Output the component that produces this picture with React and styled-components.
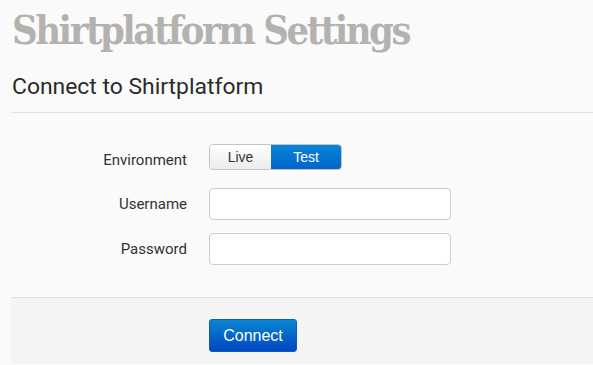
import React, { useState } from 'react';
import styled, { createGlobalStyle } from 'styled-components';

const GlobalStyle = createGlobalStyle`
  html, body {
    margin: 0;
    padding: 0;
    background: #fafafa;
  }
`;

const Page = styled.div`
  padding-left: 11px;
`;

const Title = styled.h1`
  margin: 0;
  padding: 4px 0 0 1px;
  font-family: "DejaVu Serif Condensed", "DejaVu Serif", serif;
  font-stretch: condensed;
  font-weight: 700;
  font-size: 39.5px;
  line-height: 52px;
  color: #b3b2af;
  letter-spacing: -2.45px;
  white-space: nowrap;
`;

const Subtitle = styled.h2`
  margin: 0;
  padding: 18px 0 12px 1px;
  font-family: Roboto, sans-serif;
  font-weight: 400;
  font-size: 22.9px;
  line-height: 26px;
  color: #2b2b2b;
  border-bottom: 1px solid #e2e2e2;
`;

const Form = styled.div`
  display: grid;
  grid-template-columns: 176px 242px;
  column-gap: 22px;
  row-gap: 13px;
  align-items: center;
  padding: 31px 0 32px;
`;

const Label = styled.label`
  font-family: Roboto, sans-serif;
  font-size: 15px;
  color: #333;
  text-align: right;
`;

const Segmented = styled.div`
  display: flex;
  width: 133px;
  height: 26px;
  margin-bottom: 5px;
  border-radius: 4px;
  overflow: hidden;
  border: 1px solid #c4c4c4;
  box-sizing: border-box;
`;

const Segment = styled.button`
  flex: ${(p) => (p.$active ? '0 0 70px' : '1')};
  border: none;
  margin: 0;
  padding: 0;
  font-family: "Liberation Sans", Arial, sans-serif;
  font-size: 14px;
  color: ${(p) => (p.$active ? '#fff' : '#333')};
  background: ${(p) =>
    p.$active
      ? 'linear-gradient(#0a84d8, #0064c8)'
      : 'linear-gradient(#ffffff, #ececec)'};
`;

const Input = styled.input`
  box-sizing: border-box;
  width: 242px;
  height: 32px;
  border: 1px solid #cdcdcd;
  border-radius: 4px;
  background: #fff;
  font-family: "Liberation Sans", Arial, sans-serif;
  font-size: 14px;
  padding: 0 8px;
`;

const Footer = styled.div`
  background: #f4f4f4;
  border-top: 1px solid #dedede;
  padding: 21px 0 12px 198px;
`;

const Button = styled.button`
  display: block;
  width: 88px;
  height: 33px;
  border: 1px solid #0a5cb8;
  border-radius: 3px;
  background: linear-gradient(#0a86d2, #0046c2);
  color: #fff;
  font-family: "Liberation Sans", Arial, sans-serif;
  font-size: 16px;
  padding: 0;
`;

export default function App() {
  const [env, setEnv] = useState('test');
  return (
    <Page>
      <GlobalStyle />
      <Title>Shirtplatform Settings</Title>
      <Subtitle>Connect to Shirtplatform</Subtitle>
      <Form>
        <Label>Environment</Label>
        <Segmented>
          <Segment $active={env === 'live'} onClick={() => setEnv('live')}>Live</Segment>
          <Segment $active={env === 'test'} onClick={() => setEnv('test')}>Test</Segment>
        </Segmented>
        <Label>Username</Label>
        <Input type="text" />
        <Label>Password</Label>
        <Input type="password" />
      </Form>
      <Footer>
        <Button>Connect</Button>
      </Footer>
    </Page>
  );
}
